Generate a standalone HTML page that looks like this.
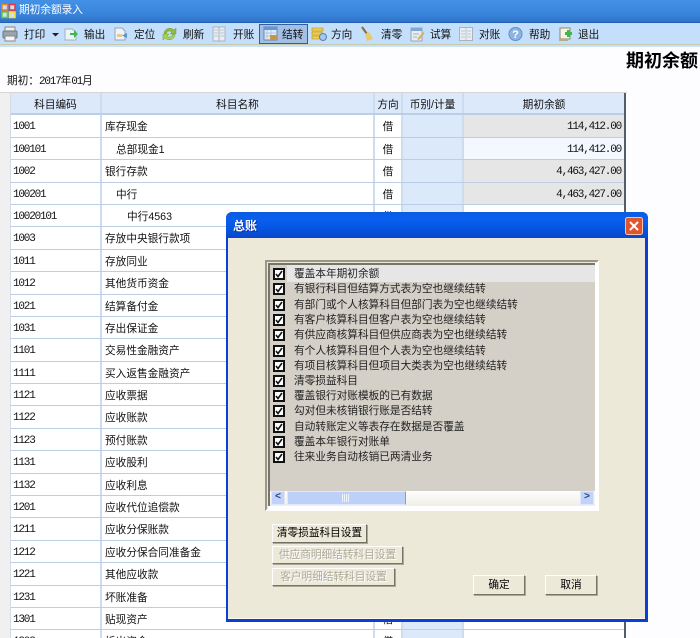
<!DOCTYPE html>
<html lang="zh"><head><meta charset="utf-8"><title>期初余额录入</title>
<style>
html,body{margin:0;padding:0}
body{width:700px;height:638px;overflow:hidden;position:relative;background:#fdfdff;color:#111;font:10.67px/14px "Liberation Sans","WenQuanYi Zen Hei","Noto Sans CJK SC",sans-serif}
.a{position:absolute}
.tb{position:absolute;top:28px;white-space:nowrap;line-height:14px}
.ic{position:absolute;top:26px}
.n{font-family:"Liberation Mono","WenQuanYi Zen Hei",monospace;font-size:11px;letter-spacing:-1.2px}
#t{position:absolute;left:10px;top:93px;width:616px;height:545px;overflow:hidden;background:#fff;border-right:2px solid #555c6a;box-sizing:border-box;border-left:1px solid #d3dbe6}
.r{height:22.4px;display:flex;box-sizing:border-box;border-bottom:1px solid #bccde6;line-height:24px}
.r>div{box-sizing:border-box;height:100%;white-space:nowrap;overflow:hidden}
.c1{width:91px;padding-left:2px;border-right:2px solid #cfdcf0;font-family:"Liberation Mono",monospace;font-size:11px;letter-spacing:-1.2px;line-height:25px}
.c2{width:273px;padding-left:3px;border-right:2px solid #cfdcf0}
.c3{width:28px;text-align:center;border-right:2px solid #cfdcf0}
.c4{width:61px;background:#dce9fb;border-right:2px solid #cfdcf0;text-align:center}
.c5{width:160px;text-align:right;padding-right:3px;font-family:"Liberation Mono",monospace;font-size:11px;letter-spacing:-1.2px;line-height:25px}
.g{background:#e6e6e6}.l{background:#f3f8ff}
.h{background:#dce9fb;border-bottom:2px solid #bccde6}
.h>div{text-align:center;font:10.67px/24px "Liberation Sans","WenQuanYi Zen Hei","Noto Sans CJK SC",sans-serif;letter-spacing:0;padding:0}
#d{position:absolute;left:226px;top:212px;width:422px;height:410px;background:#0a3ed6;border-radius:6px 6px 0 0}
#dt{position:absolute;left:0;top:0;width:422px;height:26px;border-radius:6px 6px 0 0;background:linear-gradient(#0a5ce0,#0a5ff0 30%,#0453dd 70%,#0a46c8)}
#db{position:absolute;left:2px;top:26px;width:417px;height:381px;background:#ece9d8;box-shadow:inset 0 -1px 0 #fffbe8}
#lb{position:absolute;left:37px;top:22px;width:334px;height:251px;box-sizing:border-box;border:2px solid #fff;border-left-color:#9a978a;border-top-color:#9a978a;background:#fff}
#li{position:absolute;left:1px;top:1px;width:325px;height:226px;background:#d4d0c8;border-left:2px solid #77756a;border-top:2px solid #77756a;overflow:hidden}
.it{position:absolute;left:0;height:18px;white-space:nowrap;line-height:18px;padding-left:24px;color:#222}
.cb{position:absolute;left:3px;top:3px;width:12px;height:12px;box-sizing:border-box;border:2px solid #111;background:#fff}
.cb svg{position:absolute;left:0;top:0}
.btn{position:absolute;box-sizing:border-box;background:#ece9d8;border:1px solid;border-color:#fff #77756a #77756a #fff;box-shadow:1px 1px 0 #aca899;text-align:center;line-height:17px;color:#000;white-space:nowrap}
.dis{color:#aca899;text-shadow:1px 1px 0 #fff}
</style></head><body>
<div class="a" style="left:0;top:0;width:700px;height:23px;background:linear-gradient(#4491e6,#3a85dc 60%,#2c6fc6)"></div>
<div class="a" style="left:0;top:22px;width:700px;height:1px;background:#1f5fb5"></div>
<svg class="a" style="left:1px;top:3px" width="16" height="16"><rect x="1" y="1.500" width="5.500" height="5.500" fill="#cfe0f5" stroke="#ef7d2a" stroke-width="1.500"/><rect x="8.500" y="1.500" width="5.500" height="5.500" fill="#cfe0f5" stroke="#e33" stroke-width="1.500"/><rect x="1" y="9" width="5.500" height="5.500" fill="#cfe0f5" stroke="#6cc92f" stroke-width="1.500"/><rect x="8.500" y="9" width="5.500" height="5.500" fill="#cfe0f5" stroke="#ffe22a" stroke-width="1.500"/></svg>
<div class="a" style="left:19px;top:3px;color:#fff">期初余额录入</div>
<div class="a" style="left:0;top:23px;width:700px;height:21px;background:#c3dffb"></div>
<div class="a" style="left:0;top:44px;width:700px;height:1px;background:#c9c9a9"></div>
<div class="a" style="left:0;top:45px;width:700px;height:2px;background:#c9e2fb"></div>

<svg class="ic" style="left:2px" width="16" height="16"><rect x="3" y="1" width="10" height="5" fill="#eee" stroke="#888"/><rect x="1" y="5" width="14" height="7" rx="1" fill="#9aa4ad" stroke="#6d7780"/><rect x="3" y="10" width="10" height="5" fill="#f5f5f5" stroke="#888"/></svg>
<div class="tb" style="left:24px">打印</div>
<svg class="a" style="left:52px;top:33px" width="7" height="4"><path d="M0 0H7L3.500 3.500Z" fill="#222"/></svg>
<svg class="ic" style="left:64px" width="15" height="16"><path d="M1 3H8L12 6V14H1Z" fill="#eef3f8" stroke="#a5b0bb"/><path d="M6 7H10V4L14 8L10 12V9H6Z" fill="#3fb84a"/></svg>
<div class="tb" style="left:84px">输出</div>
<svg class="ic" style="left:113px" width="15" height="16"><path d="M2 2H9L12 5V14H2Z" fill="#eef3f8" stroke="#98a3b0"/><rect x="4" y="8" width="5" height="3" fill="#e9c98a"/><path d="M14 7L9 9.500L14 12Z" fill="#5b8fd0"/></svg>
<div class="tb" style="left:134px">定位</div>
<svg class="ic" style="left:162px" width="15" height="16"><path d="M2 7C3 2 9 1 12 4L14 2V8H8L10 6C8 4 5 5 4 8Z" fill="#8dbb3c" stroke="#6f9a2a" stroke-width=".5"/><path d="M13 9C12 14 6 15 3 12L1 14V8H7L5 10C7 12 10 11 11 8Z" fill="#a9cf58" stroke="#6f9a2a" stroke-width=".5"/></svg>
<div class="tb" style="left:183px">刷新</div>
<svg class="ic" style="left:212px" width="15" height="16"><rect x="1" y="1" width="6" height="14" fill="#e9eef3" stroke="#a9b3bf"/><rect x="7" y="1" width="6" height="14" fill="#e9eef3" stroke="#a9b3bf"/><path d="M2 4H6M2 7H6M2 10H6M8 4H12M8 7H12M8 10H12" stroke="#bcc6d0"/></svg>
<div class="tb" style="left:233px">开账</div>
<div class="a" style="left:259px;top:24px;width:49px;height:20px;box-sizing:border-box;background:#a3bfe6;border:1px solid #2f5f9f"></div>
<svg class="ic" style="left:263px" width="15" height="16"><rect x="1" y="1" width="13" height="13" fill="#dfeafa" stroke="#6b85a8"/><rect x="1" y="1" width="13" height="3" fill="#5d9ad8"/><path d="M4 4V14M8 4V14M1 7H14M1 10H14" stroke="#a8bcd4" stroke-width=".7"/><rect x="7" y="9" width="7" height="5" fill="#c69548"/></svg>
<div class="tb" style="left:282px">结转</div>
<svg class="ic" style="left:311px" width="16" height="16"><path d="M1 2H12V5H1ZM1 6H11V9H1ZM1 10H9V13H1Z" fill="#efcd55" stroke="#a98f2c" stroke-width=".6"/><circle cx="12" cy="11" r="3.500" fill="#a9c6ea" stroke="#5b80b0"/></svg>
<div class="tb" style="left:331px">方向</div>
<svg class="ic" style="left:360px" width="14" height="16"><path d="M2 1L7 8" stroke="#8a6a3a" stroke-width="2"/><path d="M5 8L9 6L13 13L7 15Z" fill="#e9c96a"/></svg>
<div class="tb" style="left:381px">清零</div>
<svg class="ic" style="left:410px" width="15" height="16"><rect x="1" y="2" width="11" height="13" fill="#e8edf3" stroke="#9aa6b5"/><rect x="1" y="2" width="11" height="3" fill="#7fa7d2"/><path d="M3 8H9M3 11H7" stroke="#a8b4c2"/><path d="M7 13L13 6L14.500 7.500L9 14Z" fill="#e0ae55"/></svg>
<div class="tb" style="left:430px">试算</div>
<svg class="ic" style="left:459px" width="14" height="16"><rect x="0.500" y="1.500" width="13" height="13" fill="#e9eef3" stroke="#a9b3bf"/><path d="M2 5H6M2 8H6M2 11H6M8 5H12M8 8H12M8 11H12M7 2V14" stroke="#bcc6d0"/></svg>
<div class="tb" style="left:479px">对账</div>
<svg class="ic" style="left:508px" width="15" height="16"><circle cx="7.500" cy="8" r="6.500" fill="#8db4e2" stroke="#5f8fc9"/><text x="7.500" y="12" text-anchor="middle" font-size="11" font-family="Liberation Sans" font-weight="bold" fill="#fff">?</text></svg>
<div class="tb" style="left:529px">帮助</div>
<svg class="ic" style="left:558px" width="15" height="16"><path d="M2 2H12V13H2Z" fill="#f5f3ea" stroke="#8f8a70"/><path d="M1 14H10" stroke="#b5ae8c" stroke-width="2"/><path d="M7 6H9V4H12V6H14V9H12V11H9V9H7Z" fill="#3fb84a"/></svg>
<div class="tb" style="left:578px">退出</div>

<div class="a" style="left:626px;top:51px;font-size:18px;line-height:20px;font-weight:bold;color:#000;white-space:nowrap">期初余额</div>
<div class="a" style="left:7px;top:74px;white-space:nowrap">期初：<span class="n">2017</span>年<span class="n">01</span>月</div>
<div class="a" style="left:0;top:93px;width:10px;height:545px;background:#f0f0f0"></div>
<div class="a" style="left:0;top:92px;width:627px;height:1px;background:#d5d5d5"></div>

<div id="t">
<div class="r h"><div class="c1">科目编码</div><div class="c2">科目名称</div><div class="c3">方向</div><div class="c4">币别/计量</div><div class="c5">期初余额</div></div>
<div class="r"><div class="c1">1001</div><div class="c2">库存现金</div><div class="c3">借</div><div class="c4"></div><div class="c5 g">114,412.00</div></div>
<div class="r"><div class="c1">100101</div><div class="c2" style="padding-left:14px">总部现金1</div><div class="c3">借</div><div class="c4"></div><div class="c5 l">114,412.00</div></div>
<div class="r"><div class="c1">1002</div><div class="c2">银行存款</div><div class="c3">借</div><div class="c4"></div><div class="c5 g">4,463,427.00</div></div>
<div class="r"><div class="c1">100201</div><div class="c2" style="padding-left:14px">中行</div><div class="c3">借</div><div class="c4"></div><div class="c5 g">4,463,427.00</div></div>
<div class="r"><div class="c1">10020101</div><div class="c2" style="padding-left:25px">中行4563</div><div class="c3">借</div><div class="c4"></div><div class="c5"></div></div>
<div class="r"><div class="c1">1003</div><div class="c2">存放中央银行款项</div><div class="c3">借</div><div class="c4"></div><div class="c5"></div></div>
<div class="r"><div class="c1">1011</div><div class="c2">存放同业</div><div class="c3">借</div><div class="c4"></div><div class="c5"></div></div>
<div class="r"><div class="c1">1012</div><div class="c2">其他货币资金</div><div class="c3">借</div><div class="c4"></div><div class="c5"></div></div>
<div class="r"><div class="c1">1021</div><div class="c2">结算备付金</div><div class="c3">借</div><div class="c4"></div><div class="c5"></div></div>
<div class="r"><div class="c1">1031</div><div class="c2">存出保证金</div><div class="c3">借</div><div class="c4"></div><div class="c5"></div></div>
<div class="r"><div class="c1">1101</div><div class="c2">交易性金融资产</div><div class="c3">借</div><div class="c4"></div><div class="c5"></div></div>
<div class="r"><div class="c1">1111</div><div class="c2">买入返售金融资产</div><div class="c3">借</div><div class="c4"></div><div class="c5"></div></div>
<div class="r"><div class="c1">1121</div><div class="c2">应收票据</div><div class="c3">借</div><div class="c4"></div><div class="c5"></div></div>
<div class="r"><div class="c1">1122</div><div class="c2">应收账款</div><div class="c3">借</div><div class="c4"></div><div class="c5"></div></div>
<div class="r"><div class="c1">1123</div><div class="c2">预付账款</div><div class="c3">借</div><div class="c4"></div><div class="c5"></div></div>
<div class="r"><div class="c1">1131</div><div class="c2">应收股利</div><div class="c3">借</div><div class="c4"></div><div class="c5"></div></div>
<div class="r"><div class="c1">1132</div><div class="c2">应收利息</div><div class="c3">借</div><div class="c4"></div><div class="c5"></div></div>
<div class="r"><div class="c1">1201</div><div class="c2">应收代位追偿款</div><div class="c3">借</div><div class="c4"></div><div class="c5"></div></div>
<div class="r"><div class="c1">1211</div><div class="c2">应收分保账款</div><div class="c3">借</div><div class="c4"></div><div class="c5"></div></div>
<div class="r"><div class="c1">1212</div><div class="c2">应收分保合同准备金</div><div class="c3">借</div><div class="c4"></div><div class="c5"></div></div>
<div class="r"><div class="c1">1221</div><div class="c2">其他应收款</div><div class="c3">借</div><div class="c4"></div><div class="c5"></div></div>
<div class="r"><div class="c1">1231</div><div class="c2">坏账准备</div><div class="c3">贷</div><div class="c4"></div><div class="c5"></div></div>
<div class="r"><div class="c1">1301</div><div class="c2">贴现资产</div><div class="c3">借</div><div class="c4"></div><div class="c5"></div></div>
<div class="r"><div class="c1">1302</div><div class="c2">拆出资金</div><div class="c3">借</div><div class="c4"></div><div class="c5"></div></div>
</div>

<div id="d">
<div id="dt"></div>
<div class="a" style="left:7px;top:7px;color:#fff;font-weight:bold;font-size:12px;text-shadow:1px 1px 0 #0a2f9a">总账</div>
<svg class="a" style="left:399px;top:5px" width="18" height="18"><rect x=".5" y=".5" width="17" height="17" rx="2" fill="#e0552f" stroke="#f4c4b0"/><path d="M5 5L13 13M13 5L5 13" stroke="#fff" stroke-width="2"/></svg>
<div id="db">
<div id="lb">
<div class="a" style="left:0;top:0;width:1px;height:247px;background:#ece9d8"></div>
<div class="a" style="left:0;top:0;width:330px;height:1px;background:#ece9d8"></div>
<div id="li">
<div class="a" style="left:17px;top:0;width:308px;height:17px;background:#e6e6e6"></div>
<div class="it" style="top:0"><span class="cb"><svg width="8" height="8"><path d="M1 4L3 6.500L7 1" fill="none" stroke="#111" stroke-width="1.600"/></svg></span>覆盖本年期初余额</div>
<div class="it" style="top:15px"><span class="cb"><svg width="8" height="8"><path d="M1 4L3 6.500L7 1" fill="none" stroke="#111" stroke-width="1.600"/></svg></span>有银行科目但结算方式表为空也继续结转</div>
<div class="it" style="top:31px"><span class="cb"><svg width="8" height="8"><path d="M1 4L3 6.500L7 1" fill="none" stroke="#111" stroke-width="1.600"/></svg></span>有部门或个人核算科目但部门表为空也继续结转</div>
<div class="it" style="top:46px"><span class="cb"><svg width="8" height="8"><path d="M1 4L3 6.500L7 1" fill="none" stroke="#111" stroke-width="1.600"/></svg></span>有客户核算科目但客户表为空也继续结转</div>
<div class="it" style="top:61px"><span class="cb"><svg width="8" height="8"><path d="M1 4L3 6.500L7 1" fill="none" stroke="#111" stroke-width="1.600"/></svg></span>有供应商核算科目但供应商表为空也继续结转</div>
<div class="it" style="top:77px"><span class="cb"><svg width="8" height="8"><path d="M1 4L3 6.500L7 1" fill="none" stroke="#111" stroke-width="1.600"/></svg></span>有个人核算科目但个人表为空也继续结转</div>
<div class="it" style="top:92px"><span class="cb"><svg width="8" height="8"><path d="M1 4L3 6.500L7 1" fill="none" stroke="#111" stroke-width="1.600"/></svg></span>有项目核算科目但项目大类表为空也继续结转</div>
<div class="it" style="top:107px"><span class="cb"><svg width="8" height="8"><path d="M1 4L3 6.500L7 1" fill="none" stroke="#111" stroke-width="1.600"/></svg></span>清零损益科目</div>
<div class="it" style="top:122px"><span class="cb"><svg width="8" height="8"><path d="M1 4L3 6.500L7 1" fill="none" stroke="#111" stroke-width="1.600"/></svg></span>覆盖银行对账模板的已有数据</div>
<div class="it" style="top:137px"><span class="cb"><svg width="8" height="8"><path d="M1 4L3 6.500L7 1" fill="none" stroke="#111" stroke-width="1.600"/></svg></span>勾对但未核销银行账是否结转</div>
<div class="it" style="top:153px"><span class="cb"><svg width="8" height="8"><path d="M1 4L3 6.500L7 1" fill="none" stroke="#111" stroke-width="1.600"/></svg></span>自动转账定义等表存在数据是否覆盖</div>
<div class="it" style="top:168px"><span class="cb"><svg width="8" height="8"><path d="M1 4L3 6.500L7 1" fill="none" stroke="#111" stroke-width="1.600"/></svg></span>覆盖本年银行对账单</div>
<div class="it" style="top:183px"><span class="cb"><svg width="8" height="8"><path d="M1 4L3 6.500L7 1" fill="none" stroke="#111" stroke-width="1.600"/></svg></span>往来业务自动核销已两清业务</div>
</div>
<div class="a" style="left:1px;top:229px;width:2px;height:15px;background:#77756a"></div>
<div class="a" style="left:3px;top:229px;width:325px;height:15px;background:linear-gradient(#fefefe,#f1efe6)"></div>
<div class="a" style="left:4px;top:229px;width:14px;height:14px;background:#c1d3fb;border:1px solid #dfe8fb;box-sizing:border-box;color:#2a3f77;font:bold 10px/12px 'Liberation Mono',monospace;text-align:center">&lt;</div>
<div class="a" style="left:20px;top:229px;width:119px;height:14px;background:#bcd0f8;border:1px solid #e0e8fb;border-right-color:#7f9fd8;box-sizing:border-box"></div>
<svg class="a" style="left:75px;top:232px" width="8" height="8"><path d="M.5 0V8M2.500 0V8M4.500 0V8M6.500 0V8" stroke="#eef3fd"/></svg>
<div class="a" style="left:313px;top:229px;width:14px;height:14px;background:#c1d3fb;border:1px solid #dfe8fb;box-sizing:border-box;color:#2a3f77;font:bold 10px/12px 'Liberation Mono',monospace;text-align:center">&gt;</div>
</div>
<div class="btn" style="left:44px;top:286px;width:95px;height:19px;border-color:#fff #716f64 #716f64 #fff">清零损益科目设置</div>
<div class="btn dis" style="left:44px;top:308px;width:131px;height:18px">供应商明细结转科目设置</div>
<div class="btn dis" style="left:44px;top:330px;width:123px;height:18px">客户明细结转科目设置</div>
<div class="btn" style="left:245px;top:337px;width:52px;height:20px;line-height:18px">确定</div>
<div class="btn" style="left:317px;top:337px;width:52px;height:20px;line-height:18px">取消</div>
</div>
</div>
</body></html>
